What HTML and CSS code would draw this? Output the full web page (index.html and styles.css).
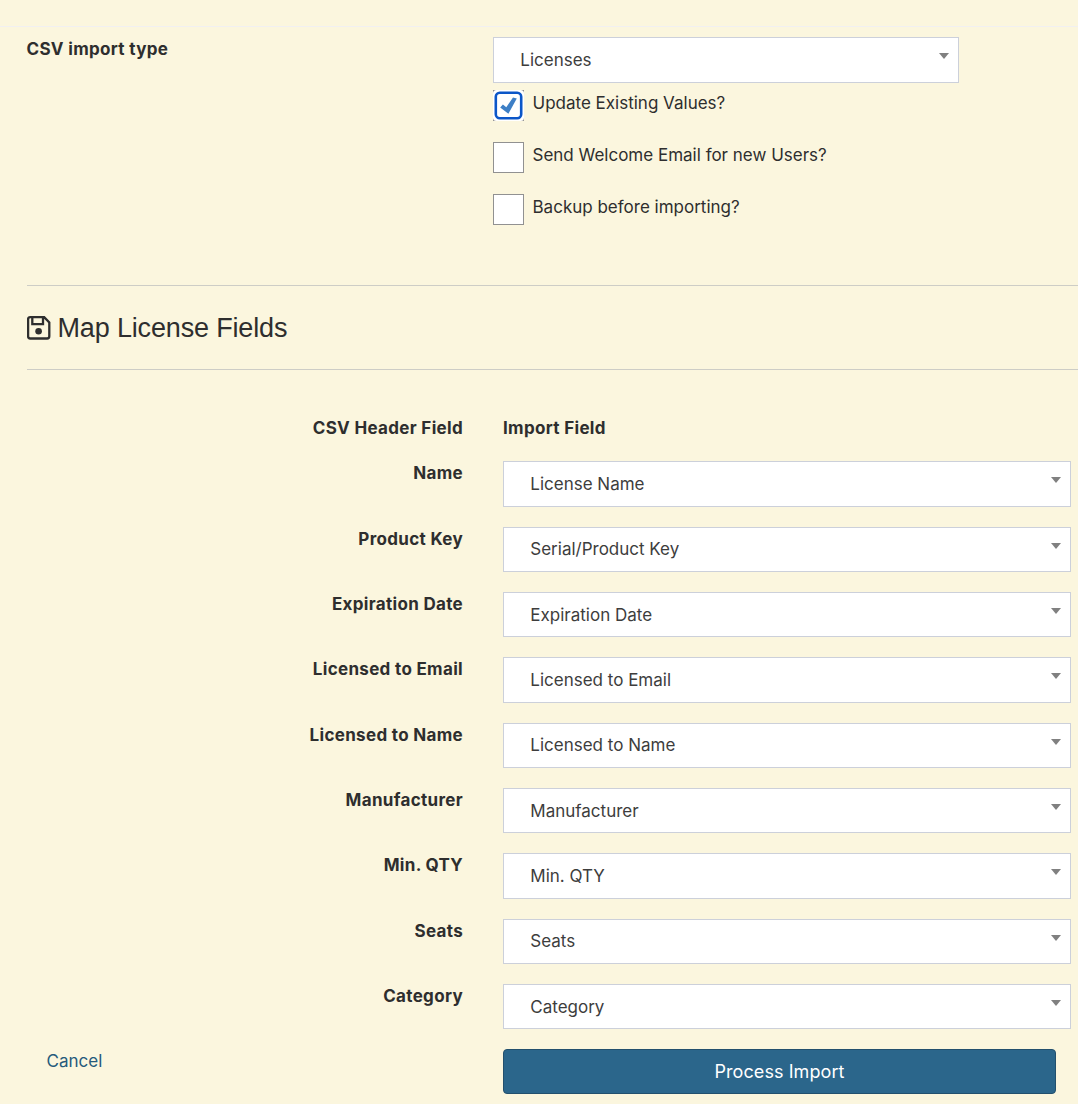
FILE: index.html
```html
<!DOCTYPE html>
<html lang="en">
<head>
<meta charset="utf-8">
<title>Import</title>
<link rel="stylesheet" href="styles.css">
</head>
<body>
<main class="page">
  <section class="import-type">
    <div class="type-label">CSV import type</div>
    <div class="type-options">
      <div class="select select-type"><span>Licenses</span><i class="arrow"></i></div>
      <label class="check"><span class="box checked"><svg width="31" height="31" viewBox="0 0 31 31"><rect x=".5" y=".5" width="30" height="30" fill="#fff" stroke="#919191"/><rect width="31" height="31" rx="3.5" fill="#fff"/><rect x="2.8" y="2.8" width="25.4" height="25.4" rx="4" fill="#fff" stroke="#0b56c8" stroke-width="2.6"/><path d="M7.2 17.5 9.9 14.5 13.3 17.3 20 7.4 23.8 8.5 15.4 23.7Z" fill="#3d7fc6"/></svg></span><span>Update Existing Values?</span></label>
      <label class="check"><span class="box"></span><span>Send Welcome Email for new Users?</span></label>
      <label class="check"><span class="box"></span><span>Backup before importing?</span></label>
    </div>
  </section>
  <h2 class="heading">
    <svg class="save" width="24" height="24" viewBox="0 0 24 24" fill="none" stroke="#2e2e2e" stroke-width="2.3"><path d="M3.2 1.2H17.2L22.3 6.5V20.3Q22.3 22.5 20.1 22.5H3.2Q1.1 22.5 1.1 20.3V3.4Q1.1 1.2 3.2 1.2ZM5.3 1.5V8.2H16V1.5"/><circle cx="11.6" cy="15.3" r="3.3" fill="#2e2e2e" stroke="none"/></svg>
    <span>Map License Fields</span>
  </h2>
  <section class="mapping">
    <div class="map-head"><b>CSV Header Field</b><b>Import Field</b></div>
    <div class="map-row"><b>Name</b><div class="select"><span>License Name</span><i class="arrow"></i></div></div>
    <div class="map-row"><b>Product Key</b><div class="select"><span>Serial/Product Key</span><i class="arrow"></i></div></div>
    <div class="map-row"><b>Expiration Date</b><div class="select"><span>Expiration Date</span><i class="arrow"></i></div></div>
    <div class="map-row"><b>Licensed to Email</b><div class="select"><span>Licensed to Email</span><i class="arrow"></i></div></div>
    <div class="map-row"><b>Licensed to Name</b><div class="select"><span>Licensed to Name</span><i class="arrow"></i></div></div>
    <div class="map-row"><b>Manufacturer</b><div class="select"><span>Manufacturer</span><i class="arrow"></i></div></div>
    <div class="map-row"><b>Min. QTY</b><div class="select"><span>Min. QTY</span><i class="arrow"></i></div></div>
    <div class="map-row"><b>Seats</b><div class="select"><span>Seats</span><i class="arrow"></i></div></div>
    <div class="map-row"><b>Category</b><div class="select"><span>Category</span><i class="arrow"></i></div></div>
  </section>
  <footer class="actions">
    <a class="cancel">Cancel</a>
    <button class="submit">Process Import</button>
  </footer>
</main>
</body>
</html>
```
FILE: styles.css
```css
* { box-sizing: border-box; }
body {
  margin: 0;
  background: #fbf6de;
  color: #2e2e2e;
  font: 17px/24px Inter, "Liberation Sans", sans-serif;
  overflow: hidden;
}
.page { height: 1104px; padding-top: 26px; }
.import-type {
  display: grid;
  grid-template-columns: 466px 466px;
  height: 259px;
  padding: 10px 0 0 27px;
  border-top: 1px solid #f1f0f1;
}
.type-label, b { font-weight: 700; letter-spacing: 0.32px; }
.type-label { margin-left: -0.5px; }
.select {
  display: flex;
  justify-content: space-between;
  align-items: center;
  height: 45.33px;
  padding: 0 9px 0 26.3px;
  border: 1px solid #ccd0da;
  background: #fff;
  color: #3d3d3d;
}
.select-type { height: 46px; }
.arrow {
  margin-top: -7.4px;
  border: solid transparent;
  border-width: 6px 5px 0;
  border-top-color: #808080;
}
.check { display: flex; gap: 8.5px; height: 52px; padding-top: 7px; }
.check > span:last-child { margin-top: 1px; }
.box {
  width: 31px;
  height: 31px;
  border: 1px solid #919191;
  background: #fff;
}
.box.checked { border: 0; background: none; }
.box svg { display: block; }
.heading {
  display: flex;
  align-items: center;
  gap: 7px;
  height: 85px;
  margin: 0 0 0 27px;
  border: solid #cdcdc6;
  border-width: 1px 0;
  font: 27px/32px "Liberation Sans", sans-serif;
  letter-spacing: -0.16px;
}
.save { margin: 0 0 0 -0.5px; }
.mapping { padding-top: 46px; }
.map-head, .map-row {
  display: grid;
  grid-template-columns: 463px 568px;
  column-gap: 40px;
}
.map-head { height: 45.4px; }
.map-row { height: 65.33px; }
.map-head b:first-child, .map-row b { text-align: right; }
.actions {
  display: grid;
  grid-template-columns: 456.5px 553px;
  padding-left: 46.5px;
}
.cancel { color: #255a7c; }
.submit {
  height: 45px;
  border: 1px solid #23506d;
  border-radius: 4px;
  background: #2b668b;
  color: #fff;
  font: 18px/24px Inter, "Liberation Sans", sans-serif;
  letter-spacing: 0.08px;
}
```
